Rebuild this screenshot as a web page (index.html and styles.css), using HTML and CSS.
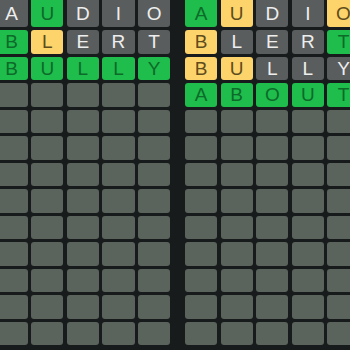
FILE: index.html
```html
<!DOCTYPE html>
<html lang="en">
<head>
  <meta charset="UTF-8">
  <title>Dordle</title>
  <link rel="stylesheet" href="styles.css">
</head>
<body>

  <!-- Two boards side by side -->
  <div class="boards">
    <div class="board" id="board-1"></div>
    <div class="board" id="board-2"></div>
  </div>

  <script>
    const ROWS = 13;

    // g = green, y = yellow, x = gray
    const boards = [
      {
        id: "board-1",
        guesses: [
          ["AUDIO", "xgxxx"],
          ["BLERT", "gyxxx"],
          ["BULLY", "ggggg"]
        ]
      },
      {
        id: "board-2",
        guesses: [
          ["AUDIO", "gyxxy"],
          ["BLERT", "yxxxg"],
          ["BULLY", "yyxxx"],
          ["ABOUT", "ggggg"]
        ]
      }
    ];

    const states = { g: "green", y: "yellow", x: "gray" };

    boards.forEach(board => {
      const el = document.getElementById(board.id);
      for (let r = 0; r < ROWS; r++) {
        const guess = board.guesses[r];
        for (let c = 0; c < 5; c++) {
          const tile = document.createElement("div");
          tile.className = "tile";
          if (guess) {
            tile.textContent = guess[0][c];
            tile.classList.add(states[guess[1][c]]);
          }
          el.appendChild(tile);
        }
      }
    });
  </script>
</body>
</html>
```

FILE: styles.css
```css
body {
  margin: 0;
  padding: 0;
  background-color: #181b1b;
  font-family: 'Liberation Sans', Arial, sans-serif;
  overflow: hidden;
}

.boards {
  display: flex;
  gap: 14.8px;
  margin-left: -4.5px;
  margin-top: -3px;
}

.board {
  display: grid;
  grid-template-columns: repeat(5, 32.3px);
  grid-template-rows: 30px repeat(12, 23.5px);
  column-gap: 3.3px;
  row-gap: 3px;
}

.tile {
  background-color: #5b635d;
  border-radius: 3px;
  display: flex;
  align-items: center;
  justify-content: center;
  font-size: 19px;
  line-height: 1;
}

.tile:nth-child(-n+5) {
  padding-top: 3px;
}

.tile.gray {
  background-color: #5a5d5d;
  color: #eeeeee;
}

.tile.green {
  background-color: #1fbd4c;
  color: #0d6a29;
}

.tile.yellow {
  background-color: #fdd36b;
  color: #5e4c1c;
}
```
